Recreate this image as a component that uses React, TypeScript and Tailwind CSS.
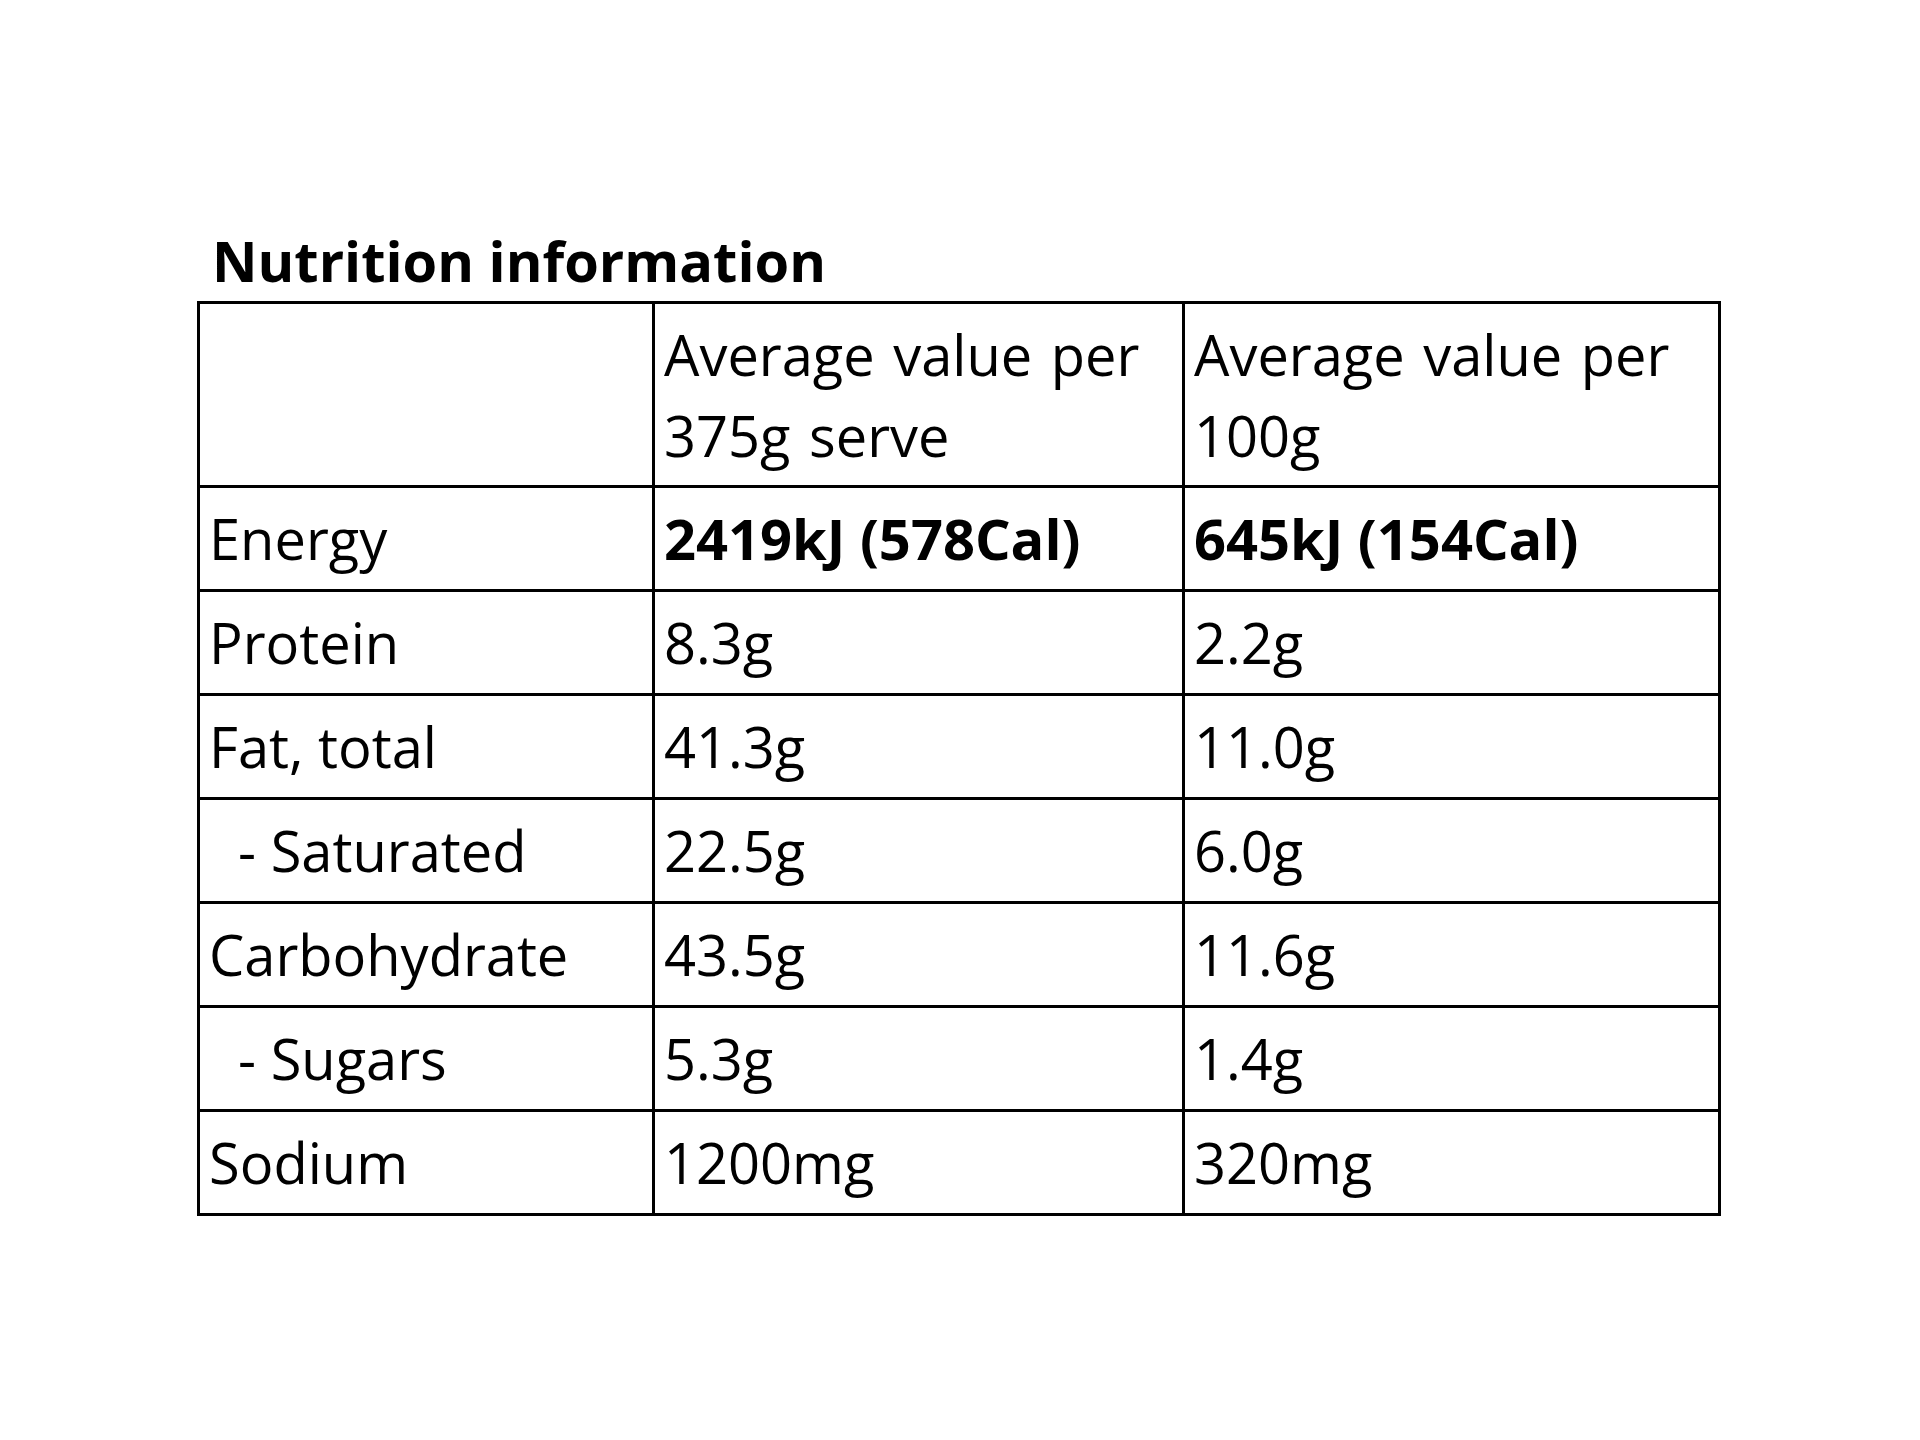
import React from 'react';

const rows = [
  { label: 'Energy', serve: '2419kJ (578Cal)', per100: '645kJ (154Cal)', bold: true },
  { label: 'Protein', serve: '8.3g', per100: '2.2g' },
  { label: 'Fat, total', serve: '41.3g', per100: '11.0g' },
  { label: '\u00a0\u00a0- Saturated', serve: '22.5g', per100: '6.0g' },
  { label: 'Carbohydrate', serve: '43.5g', per100: '11.6g' },
  { label: '\u00a0\u00a0- Sugars', serve: '5.3g', per100: '1.4g' },
  { label: 'Sodium', serve: '1200mg', per100: '320mg' },
];

const head = 'border-[3px] border-black px-[9px] pt-[10px] pb-[9px] align-top font-normal text-left';
const cell = 'border-[3px] border-black px-[9px] py-[10px] align-top';

const App = () => {
  return (
    <div
      className="min-h-screen bg-white text-black"
      style={{ fontFamily: '"Open Sans", "Liberation Sans", sans-serif' }}
    >
      <div className="pl-[197px] pt-[220px] text-[56px] leading-[81px]">
        <h2 className="pl-[15px] font-bold">Nutrition information</h2>
        <table className="w-[1521px] table-fixed border-collapse">
          <colgroup>
            <col className="w-[455px]" />
            <col className="w-[530px]" />
            <col className="w-[536px]" />
          </colgroup>
          <thead>
            <tr>
              <th className={head}></th>
              <th className={`${head} [word-spacing:4px]`}>Average value per 375g serve</th>
              <th className={`${head} [word-spacing:4px]`}>Average value per 100g</th>
            </tr>
          </thead>
          <tbody>
            {rows.map((row) => (
              <tr key={row.label}>
                <td className={`${cell} whitespace-pre`}>{row.label}</td>
                <td className={`${cell} ${row.bold ? 'font-bold' : ''}`}>{row.serve}</td>
                <td className={`${cell} ${row.bold ? 'font-bold' : ''}`}>{row.per100}</td>
              </tr>
            ))}
          </tbody>
        </table>
      </div>
    </div>
  );
};

export default App;
